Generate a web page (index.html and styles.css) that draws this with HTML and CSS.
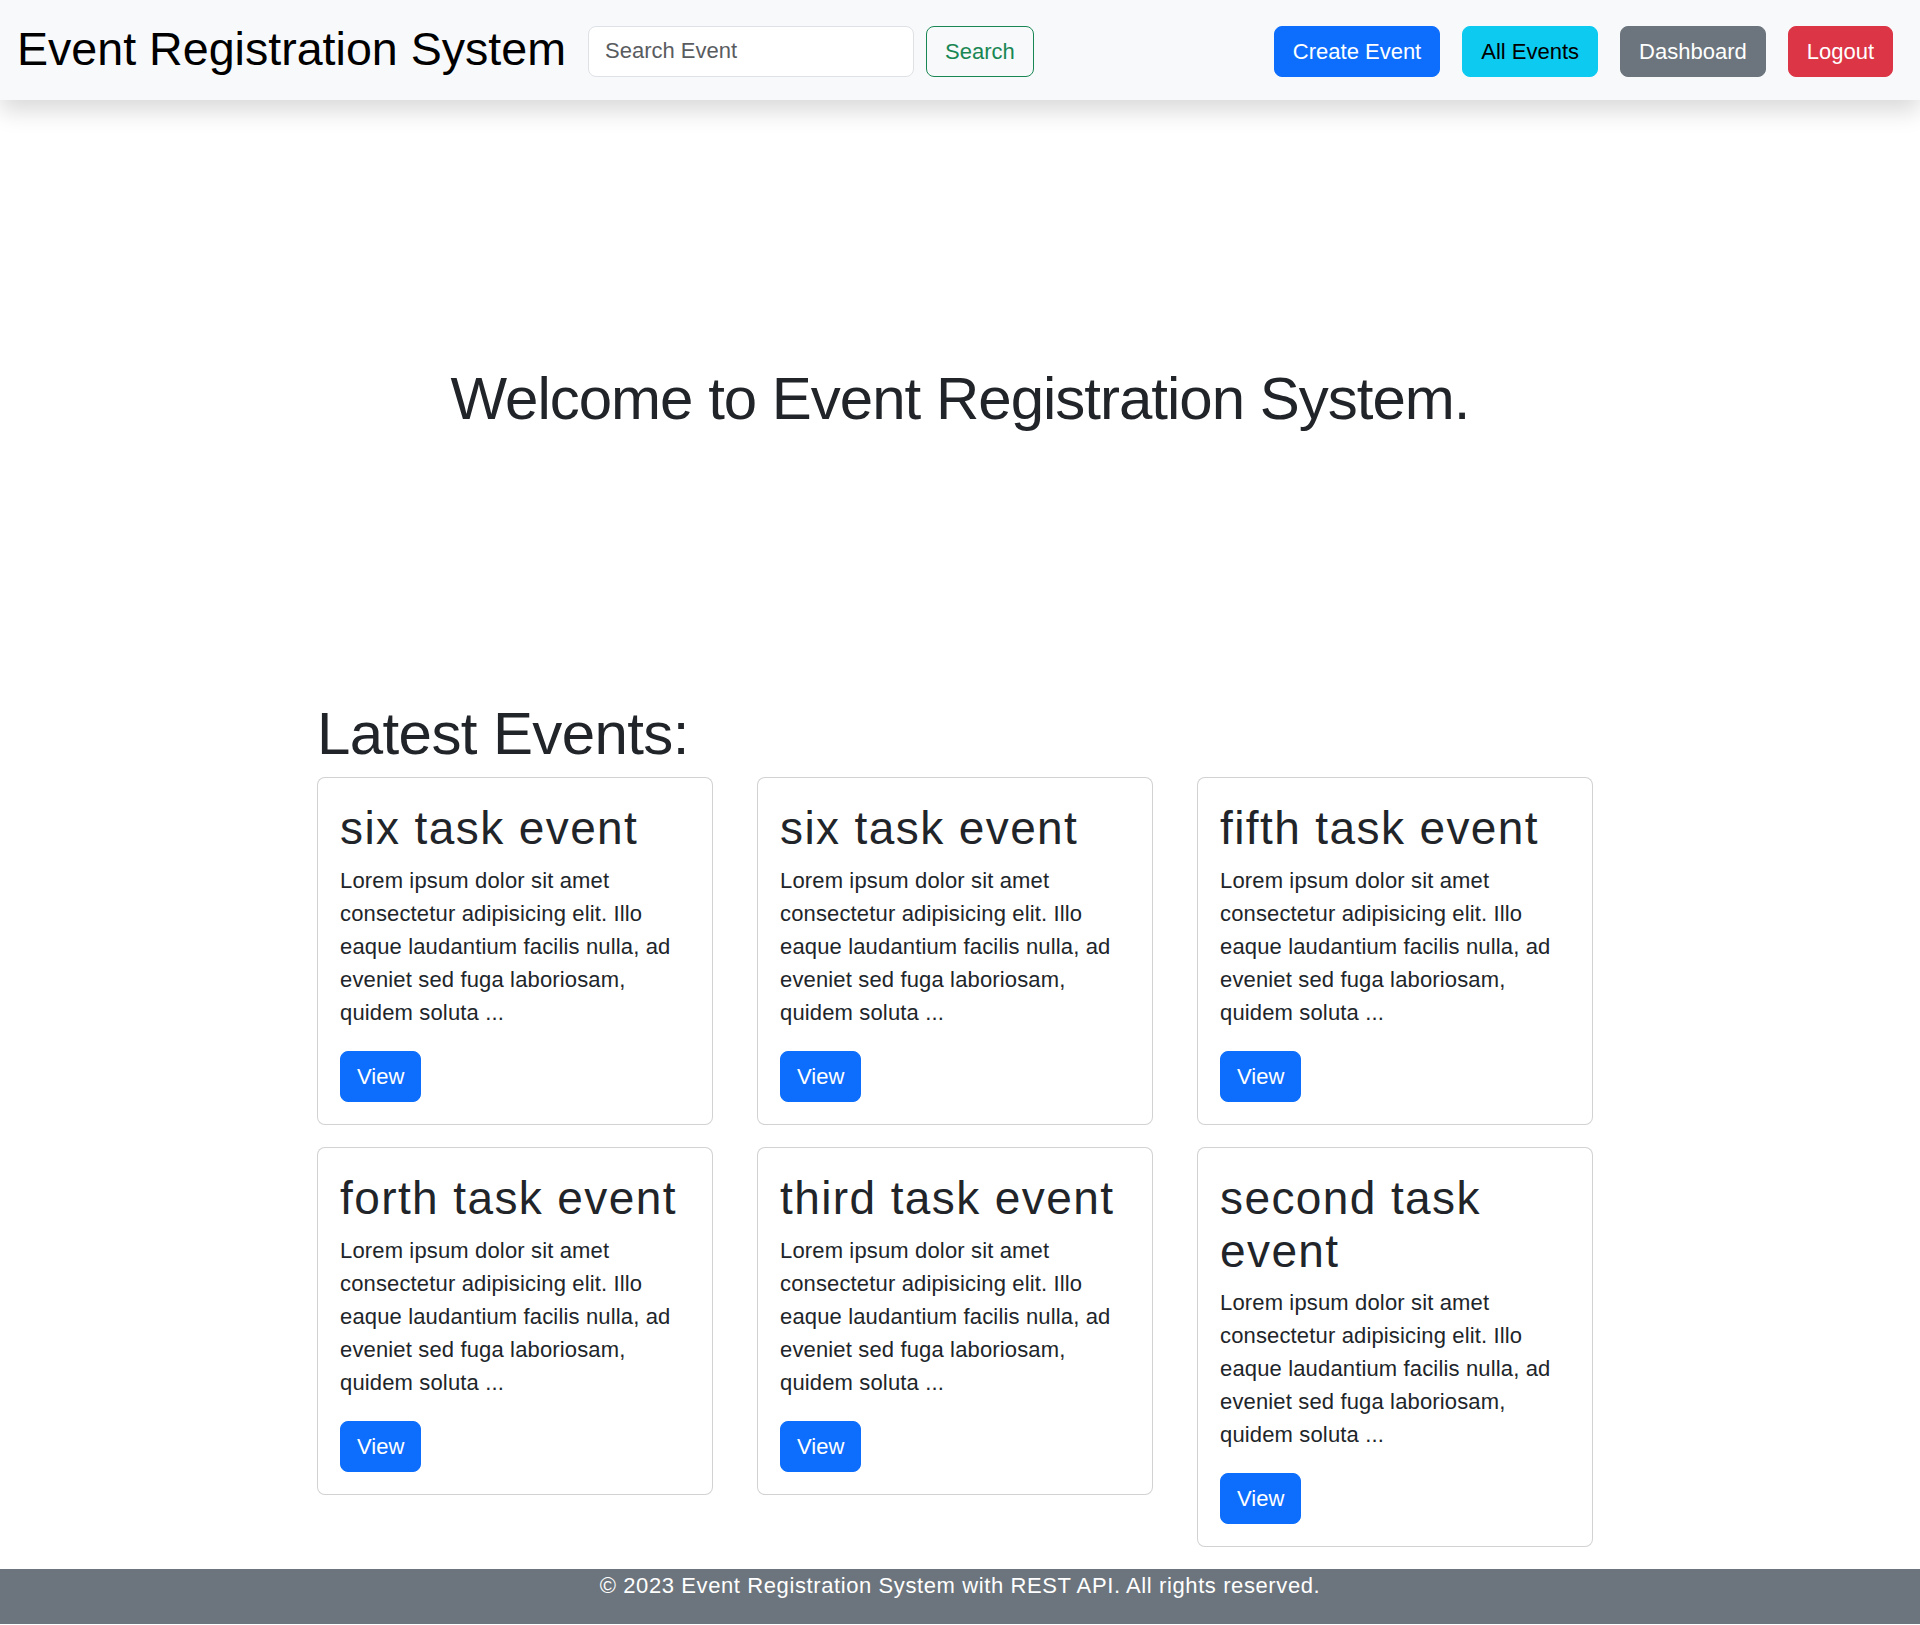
FILE: index.html
```html
<!DOCTYPE html>
<html lang="en">
<head>
<meta charset="utf-8">
<title>Event Registration System</title>
<link rel="stylesheet" href="styles.css">
</head>
<body>
<nav class="navbar">
  <a class="brand" href="#">Event Registration System</a>
  <form class="search">
    <input class="search-input" type="search" placeholder="Search Event">
    <button class="btn btn-outline-success" type="button">Search</button>
  </form>
  <div class="nav-actions">
    <a class="btn btn-primary" href="#">Create Event</a>
    <a class="btn btn-info" href="#">All Events</a>
    <a class="btn btn-secondary" href="#">Dashboard</a>
    <a class="btn btn-danger" href="#">Logout</a>
  </div>
</nav>

<section class="hero">
  <h1 class="hero-title">Welcome to Event Registration System.</h1>
</section>

<main class="container">
  <h1 class="section-title">Latest Events:</h1>
  <div class="cards">
    <div class="card">
      <h2 class="card-title">six task event</h2>
      <p class="card-text">Lorem ipsum dolor sit amet consectetur adipisicing elit. Illo eaque laudantium facilis nulla, ad eveniet sed fuga laboriosam, quidem soluta ...</p>
      <a class="btn btn-primary" href="#">View</a>
    </div>
    <div class="card">
      <h2 class="card-title">six task event</h2>
      <p class="card-text">Lorem ipsum dolor sit amet consectetur adipisicing elit. Illo eaque laudantium facilis nulla, ad eveniet sed fuga laboriosam, quidem soluta ...</p>
      <a class="btn btn-primary" href="#">View</a>
    </div>
    <div class="card">
      <h2 class="card-title">fifth task event</h2>
      <p class="card-text">Lorem ipsum dolor sit amet consectetur adipisicing elit. Illo eaque laudantium facilis nulla, ad eveniet sed fuga laboriosam, quidem soluta ...</p>
      <a class="btn btn-primary" href="#">View</a>
    </div>
    <div class="card">
      <h2 class="card-title">forth task event</h2>
      <p class="card-text">Lorem ipsum dolor sit amet consectetur adipisicing elit. Illo eaque laudantium facilis nulla, ad eveniet sed fuga laboriosam, quidem soluta ...</p>
      <a class="btn btn-primary" href="#">View</a>
    </div>
    <div class="card">
      <h2 class="card-title">third task event</h2>
      <p class="card-text">Lorem ipsum dolor sit amet consectetur adipisicing elit. Illo eaque laudantium facilis nulla, ad eveniet sed fuga laboriosam, quidem soluta ...</p>
      <a class="btn btn-primary" href="#">View</a>
    </div>
    <div class="card">
      <h2 class="card-title">second task event</h2>
      <p class="card-text">Lorem ipsum dolor sit amet consectetur adipisicing elit. Illo eaque laudantium facilis nulla, ad eveniet sed fuga laboriosam, quidem soluta ...</p>
      <a class="btn btn-primary" href="#">View</a>
    </div>
  </div>
</main>

<footer class="footer">
  <p>© 2023 Event Registration System with REST API. All rights reserved.</p>
</footer>
</body>
</html>
```

FILE: styles.css
```css
* { box-sizing: border-box; }

html, body {
  margin: 0;
  padding: 0;
}

body {
  font-family: "Liberation Sans", Arial, sans-serif;
  font-size: 22px;
  line-height: 1.5;
  color: #212529;
  background: #fff;
}

a { text-decoration: none; }

/* Navbar */
.navbar {
  position: relative;
  z-index: 2;
  height: 100px;
  display: flex;
  align-items: center;
  padding: 0 27px 0 17px;
  background: #f8f9fa;
  box-shadow: 0 11px 22px rgba(0, 0, 0, 0.15);
}

.brand {
  font-size: 46.6px;
  line-height: 1.2;
  color: #000;
  white-space: nowrap;
}

.search {
  display: flex;
  align-items: center;
  gap: 12px;
  margin: 2px 0 0 22px;
}

.search-input {
  width: 326px;
  height: 51px;
  padding: 8px 16px;
  font-family: inherit;
  font-size: 22px;
  color: #212529;
  background: #fff;
  border: 1px solid #dee2e6;
  border-radius: 8px;
  outline: none;
}

.search-input::placeholder { color: #595c5f; }

.nav-actions {
  margin: 2px 0 0 auto;
  display: flex;
  gap: 22px;
}

/* Buttons */
.btn {
  display: inline-block;
  font-family: inherit;
  font-size: 22px;
  line-height: 33px;
  padding: 8px 18px;
  border: 1px solid transparent;
  border-radius: 8px;
  white-space: nowrap;
  cursor: pointer;
}

.btn-primary { background: #0d6efd; border-color: #0d6efd; color: #fff; }
.btn-info { background: #0dcaf0; border-color: #0dcaf0; color: #000; }
.btn-secondary { background: #6c757d; border-color: #6c757d; color: #fff; }
.btn-danger { background: #dc3545; border-color: #dc3545; color: #fff; }
.btn-outline-success { background: transparent; border-color: #198754; color: #198754; padding: 8px 18px; }

/* Hero */
.hero {
  height: 598px;
  display: flex;
  align-items: center;
  justify-content: center;
}

.hero-title {
  margin: 0;
  font-size: 60px;
  font-weight: 400;
  line-height: 72px;
  letter-spacing: -1px;
  text-align: center;
}

/* Events */
.container {
  width: 1286px;
  margin: 0 auto;
}

.section-title {
  margin: 0 0 7px;
  font-size: 60px;
  font-weight: 400;
  line-height: 72px;
  letter-spacing: -0.6px;
}

.cards {
  display: grid;
  grid-template-columns: repeat(3, 396px);
  column-gap: 44px;
  row-gap: 22px;
  align-items: start;
  padding-bottom: 22px;
}

.card {
  padding: 22px;
  border: 1px solid rgba(0, 0, 0, 0.175);
  border-radius: 8px;
  background: #fff;
}

.card-title {
  margin: 0 0 9px;
  padding-top: 2px;
  font-size: 46px;
  font-weight: 400;
  line-height: 52.8px;
  letter-spacing: 1.4px;
}

.card-text {
  margin: 0 0 22px;
  font-size: 22px;
  line-height: 33px;
  letter-spacing: 0.15px;
}

.card .btn {
  padding: 8px 16px;
}

/* Footer */
.footer {
  background: #6c757d;
  color: #fff;
  text-align: center;
  padding: 0 0 22px;
}

.footer p {
  margin: 0;
  font-size: 22px;
  line-height: 33px;
  letter-spacing: 0.6px;
}
```
